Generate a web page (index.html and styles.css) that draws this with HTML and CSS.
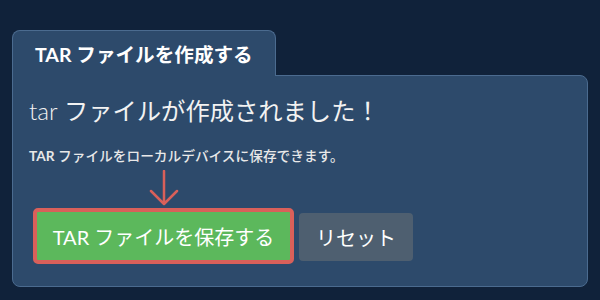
FILE: index.html
```html
<!DOCTYPE html>
<html lang="ja">
<head>
  <meta charset="UTF-8" />
  <title>TAR ファイルを作成する</title>
  <link rel="stylesheet" href="styles.css">
</head>
<body>

<div class="tar-card">
  <div class="tab">TAR ファイルを作成する</div>

  <div class="panel">
    <h2 class="done-title"><span class="latin">tar</span> ファイルが作成されました！</h2>
    <p class="done-note"><b>TAR</b> ファイルをローカルデバイスに保存できます。</p>

    <div class="actions">
      <div class="save-wrap">
        <!-- pointer arrow -->
        <svg class="pointer" width="30" height="36" viewBox="0 0 30 36">
          <path d="M15 1 V33 M2 21 L15 34 L28 21" fill="none" stroke="#d9605a" stroke-width="2.5" stroke-linecap="round" stroke-linejoin="round"/>
        </svg>
        <button class="btn save-btn">TAR ファイルを保存する</button>
      </div>
      <button class="btn reset-btn">リセット</button>
    </div>
  </div>
</div>

</body>
</html>
```

FILE: styles.css
```css
body {
  font-family: Lato, "Noto Sans CJK JP", sans-serif;
  background: #10223a;
  color: #fff;
  margin: 0;
  padding: 30px 12px 0;
}
.tar-card {
  width: 576px;
}
.tab {
  position: relative;
  z-index: 1;
  display: inline-block;
  width: 264px;
  height: 46px;
  box-sizing: border-box;
  padding: 0 0 0 22px;
  line-height: 48px;
  font-size: 19.6px;
  font-weight: bold;
  background: #2d4a6b;
  border: 1px solid #4b6b8f;
  border-bottom: none;
  border-radius: 8px 8px 0 0;
  margin-bottom: -1px;
  vertical-align: top;
}
.panel {
  background: #2d4a6b;
  border: 1px solid #4b6b8f;
  border-radius: 0 8px 8px 8px;
  padding: 19px 16px 22px;
}
.done-title {
  margin: 0;
  font-size: 24.3px;
  font-weight: normal;
  line-height: 32px;
  color: #f2f2f2;
}
.done-title .latin {
  font-weight: 300;
}
.done-note {
  margin: 19px 0 0;
  font-size: 13.7px;
  font-weight: 500;
  line-height: 20px;
  color: #e8e8e8;
}
.done-note b {
  font-weight: bold;
}
.actions {
  display: flex;
  align-items: flex-end;
  gap: 5px;
  margin: 4px 0 0 4px;
}
.save-wrap {
  display: flex;
  flex-direction: column;
  align-items: center;
}
.pointer {
  display: block;
  margin-bottom: 2px;
}
.btn {
  font-family: Lato, "Noto Sans CJK JP", sans-serif;
  font-size: 20px;
  color: #fff;
  border: none;
  border-radius: 4px;
  cursor: pointer;
}
.save-btn {
  width: 261px;
  height: 56px;
  background: #5cb85c;
  border: 4px solid #d9605a;
  border-radius: 5px;
}
.reset-btn {
  width: 114px;
  height: 48px;
  margin-bottom: 3px;
  background: #4e5f70;
}
```
